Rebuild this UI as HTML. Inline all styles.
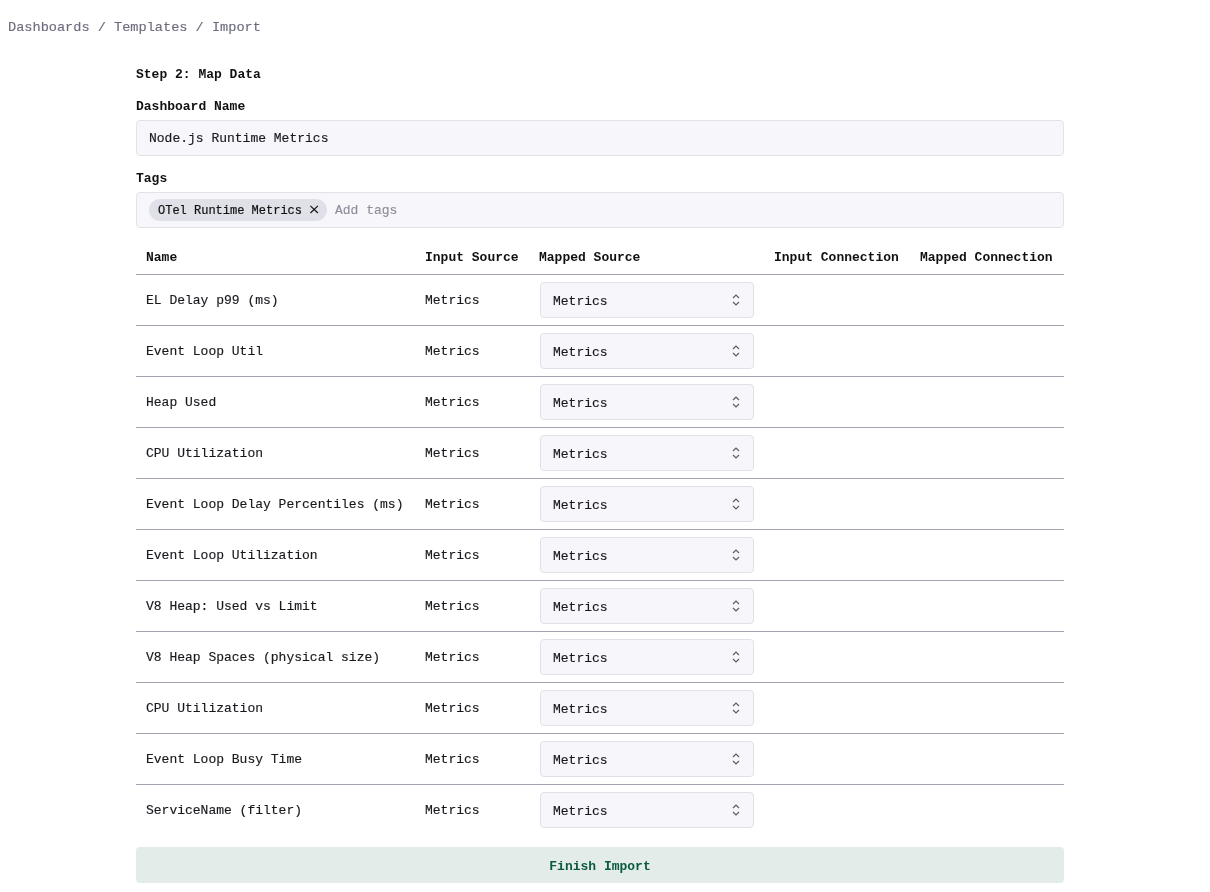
<!DOCTYPE html>
<html><head><meta charset="utf-8"><title>Import</title>
<style>
*{box-sizing:border-box;margin:0;padding:0}
html,body{width:1210px;height:892px;background:#fff;overflow:hidden}
#w{position:absolute;left:0;top:0;width:1210px;height:892px;will-change:transform}
body{font-family:"Liberation Mono",monospace;font-size:13px;color:#18181d;position:relative;-webkit-text-stroke:0.15px currentColor}
.b,.btn{-webkit-text-stroke:0}
.a{position:absolute;white-space:pre;line-height:16px}
.crumb{left:8px;top:20px;font-size:13.6px;color:#6c6c7e}
.b{font-weight:bold;color:#111114}
.inp{position:absolute;left:136px;width:928px;height:36px;background:#f7f7fb;border:1px solid #e2e2ea;border-radius:4px}
.inp .t{position:absolute;left:12px;top:10px;line-height:16px;white-space:pre}
.pill{position:absolute;left:12px;top:6px;height:22px;width:178px;background:#e0e0e9;border-radius:11px}
.hl{position:absolute;left:136px;width:928px;height:1px;background:#a4a4b2}
.sel{position:absolute;left:540px;width:214px;height:36px;background:#f7f7fb;border:1px solid #e0e0e9;border-radius:4px}
.sel .t{position:absolute;left:12px;top:11px;line-height:16px}
.sel svg{position:absolute;left:190px;top:10px}
.btn{position:absolute;left:136px;top:847px;width:928px;height:36px;background:#e4ecea;border-radius:4px;color:#0a5b3e;font-weight:bold;text-align:center;line-height:16px;padding-top:12px}
</style></head><body><div id="w">
<div class="a crumb">Dashboards / Templates / Import</div>
<div class="a b" style="left:136px;top:67px">Step 2: Map Data</div>
<div class="a b" style="left:136px;top:99px">Dashboard Name</div>
<div class="inp" style="top:120px"><div class="t">Node.js Runtime Metrics</div></div>
<div class="a b" style="left:136px;top:171px">Tags</div>
<div class="inp" style="top:192px"><div class="pill"></div><div class="t" style="left:21px;font-size:12px;color:#111;-webkit-text-stroke:0.2px #111">OTel Runtime Metrics</div><svg style="position:absolute;left:173px;top:12px" width="9" height="9" viewBox="0 0 9 9"><path d="M0.4 0.9L7.9 8M7.9 0.9L0.4 8" stroke="#141418" stroke-width="1.2"/></svg><div class="t" style="left:198px;color:#8e8e9c">Add tags</div></div>
<div class="a b" style="left:146px;top:250px">Name</div>
<div class="a b" style="left:425px;top:250px">Input Source</div>
<div class="a b" style="left:539px;top:250px">Mapped Source</div>
<div class="a b" style="left:774px;top:250px">Input Connection</div>
<div class="a b" style="left:920px;top:250px">Mapped Connection</div>
<div class="hl" style="top:274px"></div>
<div class="a" style="left:146px;top:293px">EL Delay p99 (ms)</div>
<div class="a" style="left:425px;top:293px">Metrics</div>
<div class="sel" style="top:282px"><div class="t">Metrics</div><svg width="10" height="14" viewBox="0 0 10 14"><path d="M2 5L5 2L8 5M2 9L5 12L8 9" fill="none" stroke="#5c5c6a" stroke-width="1.2"/></svg></div>
<div class="hl" style="top:325px"></div>
<div class="a" style="left:146px;top:344px">Event Loop Util</div>
<div class="a" style="left:425px;top:344px">Metrics</div>
<div class="sel" style="top:333px"><div class="t">Metrics</div><svg width="10" height="14" viewBox="0 0 10 14"><path d="M2 5L5 2L8 5M2 9L5 12L8 9" fill="none" stroke="#5c5c6a" stroke-width="1.2"/></svg></div>
<div class="hl" style="top:376px"></div>
<div class="a" style="left:146px;top:395px">Heap Used</div>
<div class="a" style="left:425px;top:395px">Metrics</div>
<div class="sel" style="top:384px"><div class="t">Metrics</div><svg width="10" height="14" viewBox="0 0 10 14"><path d="M2 5L5 2L8 5M2 9L5 12L8 9" fill="none" stroke="#5c5c6a" stroke-width="1.2"/></svg></div>
<div class="hl" style="top:427px"></div>
<div class="a" style="left:146px;top:446px">CPU Utilization</div>
<div class="a" style="left:425px;top:446px">Metrics</div>
<div class="sel" style="top:435px"><div class="t">Metrics</div><svg width="10" height="14" viewBox="0 0 10 14"><path d="M2 5L5 2L8 5M2 9L5 12L8 9" fill="none" stroke="#5c5c6a" stroke-width="1.2"/></svg></div>
<div class="hl" style="top:478px"></div>
<div class="a" style="left:146px;top:497px">Event Loop Delay Percentiles (ms)</div>
<div class="a" style="left:425px;top:497px">Metrics</div>
<div class="sel" style="top:486px"><div class="t">Metrics</div><svg width="10" height="14" viewBox="0 0 10 14"><path d="M2 5L5 2L8 5M2 9L5 12L8 9" fill="none" stroke="#5c5c6a" stroke-width="1.2"/></svg></div>
<div class="hl" style="top:529px"></div>
<div class="a" style="left:146px;top:548px">Event Loop Utilization</div>
<div class="a" style="left:425px;top:548px">Metrics</div>
<div class="sel" style="top:537px"><div class="t">Metrics</div><svg width="10" height="14" viewBox="0 0 10 14"><path d="M2 5L5 2L8 5M2 9L5 12L8 9" fill="none" stroke="#5c5c6a" stroke-width="1.2"/></svg></div>
<div class="hl" style="top:580px"></div>
<div class="a" style="left:146px;top:599px">V8 Heap: Used vs Limit</div>
<div class="a" style="left:425px;top:599px">Metrics</div>
<div class="sel" style="top:588px"><div class="t">Metrics</div><svg width="10" height="14" viewBox="0 0 10 14"><path d="M2 5L5 2L8 5M2 9L5 12L8 9" fill="none" stroke="#5c5c6a" stroke-width="1.2"/></svg></div>
<div class="hl" style="top:631px"></div>
<div class="a" style="left:146px;top:650px">V8 Heap Spaces (physical size)</div>
<div class="a" style="left:425px;top:650px">Metrics</div>
<div class="sel" style="top:639px"><div class="t">Metrics</div><svg width="10" height="14" viewBox="0 0 10 14"><path d="M2 5L5 2L8 5M2 9L5 12L8 9" fill="none" stroke="#5c5c6a" stroke-width="1.2"/></svg></div>
<div class="hl" style="top:682px"></div>
<div class="a" style="left:146px;top:701px">CPU Utilization</div>
<div class="a" style="left:425px;top:701px">Metrics</div>
<div class="sel" style="top:690px"><div class="t">Metrics</div><svg width="10" height="14" viewBox="0 0 10 14"><path d="M2 5L5 2L8 5M2 9L5 12L8 9" fill="none" stroke="#5c5c6a" stroke-width="1.2"/></svg></div>
<div class="hl" style="top:733px"></div>
<div class="a" style="left:146px;top:752px">Event Loop Busy Time</div>
<div class="a" style="left:425px;top:752px">Metrics</div>
<div class="sel" style="top:741px"><div class="t">Metrics</div><svg width="10" height="14" viewBox="0 0 10 14"><path d="M2 5L5 2L8 5M2 9L5 12L8 9" fill="none" stroke="#5c5c6a" stroke-width="1.2"/></svg></div>
<div class="hl" style="top:784px"></div>
<div class="a" style="left:146px;top:803px">ServiceName (filter)</div>
<div class="a" style="left:425px;top:803px">Metrics</div>
<div class="sel" style="top:792px"><div class="t">Metrics</div><svg width="10" height="14" viewBox="0 0 10 14"><path d="M2 5L5 2L8 5M2 9L5 12L8 9" fill="none" stroke="#5c5c6a" stroke-width="1.2"/></svg></div>
<div class="btn">Finish Import</div>
</div></body></html>
